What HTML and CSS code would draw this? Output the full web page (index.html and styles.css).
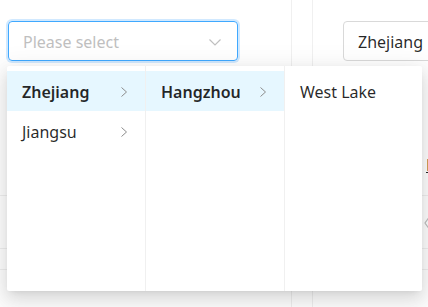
FILE: index.html
```
<!DOCTYPE html>
<html lang="en">
<head>
    <meta charset="UTF-8">
    <meta name="viewport" content="width=device-width, initial-scale=1.0">
    <title>Cascader</title>
    <link rel="stylesheet" href="styles.css">
</head>
<body>
    <div class="board">
        <div class="col col-main">
            <div class="cell cell-top">
                <div class="select select-focused">
                    <span class="placeholder">Please select</span>
                    <svg class="caret" width="14" height="14" viewBox="0 0 14 14"><path d="M1.5 4.5 L7 10 L12.5 4.5" fill="none" stroke="#bfbfbf" stroke-width="1.2"/></svg>
                </div>
            </div>
            <div class="cell cell-mid"></div>
            <div class="cell cell-row"></div>
            <div class="cell cell-rest"></div>
        </div>
        <div class="col col-gap"></div>
        <div class="col col-side">
            <div class="cell cell-top">
                <div class="select select-side">
                    <span class="value">Zhejiang</span>
                </div>
                <a class="side-link" href="#">Edit</a>
            </div>
            <div class="cell cell-mid">
                <svg class="fold" width="12" height="18" viewBox="0 0 12 18"><path d="M6 2 L1 9 L6 16 M11 2 L6 9 L11 16" fill="none" stroke="#bfbfbf" stroke-width="1.2"/></svg>
            </div>
            <div class="cell cell-row"></div>
            <div class="cell cell-rest"></div>
        </div>
    </div>

    <div class="menus">
        <ul class="menu">
            <li class="item active">Zhejiang <svg class="arrow" width="8" height="12" viewBox="0 0 8 12"><path d="M1.5 1.5 L6.5 6 L1.5 10.5" fill="none" stroke="#8c8c8c" stroke-width="1"/></svg></li>
            <li class="item">Jiangsu <svg class="arrow" width="8" height="12" viewBox="0 0 8 12"><path d="M1.5 1.5 L6.5 6 L1.5 10.5" fill="none" stroke="#8c8c8c" stroke-width="1"/></svg></li>
        </ul>
        <ul class="menu">
            <li class="item active">Hangzhou <svg class="arrow" width="8" height="12" viewBox="0 0 8 12"><path d="M1.5 1.5 L6.5 6 L1.5 10.5" fill="none" stroke="#8c8c8c" stroke-width="1"/></svg></li>
        </ul>
        <ul class="menu">
            <li class="item">West Lake</li>
        </ul>
    </div>
</body>
</html>
```
FILE: styles.css
```
body {
    margin: 0;
    background: #fff;
    font-family: "Noto Sans", "Open Sans", sans-serif;
    font-size: 16px;
    color: rgba(0, 0, 0, 0.85);
    overflow: hidden;
}
.board {
    display: flex;
    height: 307px;
}
.col {
    display: flex;
    flex-direction: column;
}
.col-main {
    width: 291px;
    flex-shrink: 0;
    border-right: 1px solid #f0f0f0;
}
.col-gap {
    width: 20px;
    flex-shrink: 0;
    border-right: 1px solid #f0f0f0;
}
.col-side {
    flex: 1;
    min-width: 0;
    overflow: hidden;
}
.cell-top {
    height: 196px;
    border-bottom: 1px solid #f0f0f0;
    padding: 21px 0 0 8px;
    box-sizing: border-box;
}
.col-side .cell-top {
    padding-left: 30px;
}
.cell-mid {
    height: 52px;
    border-bottom: 1px solid #f0f0f0;
}
.cell-row {
    height: 20px;
    border-bottom: 1px solid #f0f0f0;
}
.select {
    height: 40px;
    box-sizing: border-box;
    border: 1px solid #d9d9d9;
    border-radius: 4px;
    display: flex;
    align-items: center;
    padding: 1px 14px 0;
}
.select-focused {
    width: 230px;
    border-color: #40a9ff;
    box-shadow: 0 0 0 2px rgba(24, 144, 255, 0.2);
    justify-content: space-between;
}
.select-side {
    width: 200px;
    flex-shrink: 0;
}
.placeholder {
    color: #bfbfbf;
}
.caret {
    margin-right: 1px;
}
.side-link {
    display: inline-block;
    margin: 94px 0 0 83px;
    color: rgba(0, 0, 0, 0.85);
    line-height: 20px;
}
.fold {
    display: block;
    margin: 18px 0 0 111px;
}
.menus {
    position: absolute;
    left: 7px;
    top: 66px;
    width: 415px;
    height: 225px;
    display: flex;
    background: #fff;
    border-radius: 2px;
    box-shadow: 0 3px 6px -4px rgba(0, 0, 0, 0.12), 0 6px 16px 0 rgba(0, 0, 0, 0.1), 0 9px 28px 8px rgba(0, 0, 0, 0.07);
}
.menu {
    list-style: none;
    margin: 0;
    padding: 5px 0 0;
    width: 139px;
    border-right: 1px solid #f0f0f0;
    box-sizing: border-box;
}
.menu:last-child {
    border-right: none;
    flex: 1;
}
.item {
    height: 40px;
    box-sizing: border-box;
    display: flex;
    align-items: center;
    justify-content: space-between;
    padding: 2px 17px 0 15px;
}
.item.active {
    background: #e6f7ff;
    font-weight: 600;
}
```
